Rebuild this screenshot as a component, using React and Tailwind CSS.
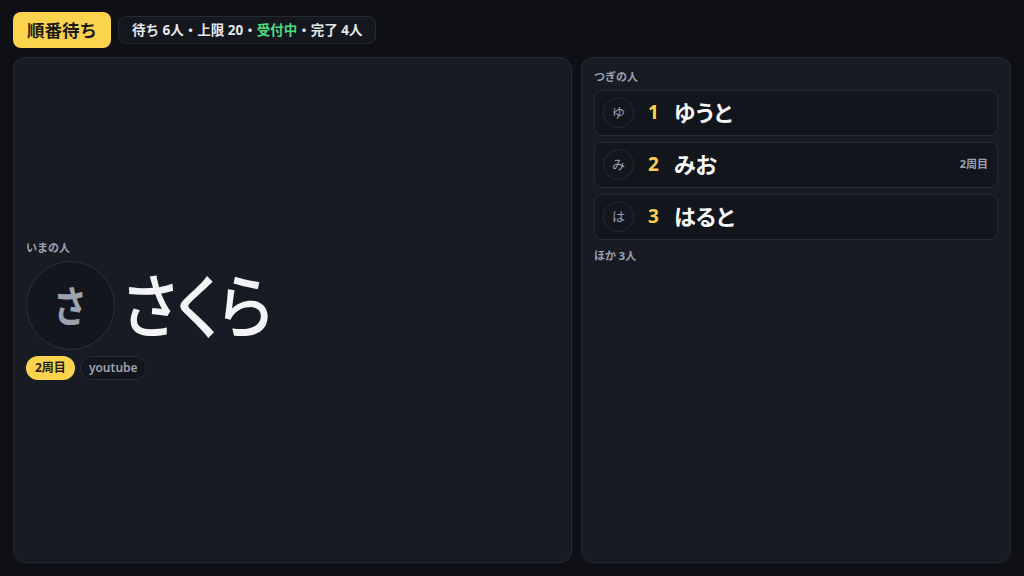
import React from 'react'

const next = [
  { n: 1, name: 'ゆうと', ini: 'ゆ' },
  { n: 2, name: 'みお', ini: 'み', note: '2周目' },
  { n: 3, name: 'はると', ini: 'は' },
]

const font = { fontFamily: '"Noto Sans", "Noto Sans CJK JP", sans-serif' }

export default function App() {
  return (
    <div style={font} className="h-[576px] w-[1024px] bg-[#0e1015] px-[13px] pt-[12px] pb-[13px] flex flex-col gap-[9px]">
      {/* header */}
      <div className="flex items-center gap-[7px] h-[36px]">
        <div className="h-[36px] px-[14px] rounded-lg bg-[#fcd34d] text-[#1c1a14] text-[17.5px] font-bold flex items-center">順番待ち</div>
        <div className="h-[28px] px-[13px] rounded-lg bg-[#14171d] border border-[#262a33] text-[13.5px] font-bold text-[#e5e7eb] flex items-center">
          待ち 6人・上限 20・<span className="text-[#4ade80]">受付中</span>・完了 4人
        </div>
      </div>

      <div className="flex-1 flex gap-[9px] min-h-0">
        {/* current */}
        <div className="w-[559px] rounded-xl bg-[#181b23] border border-[#262a33] px-[12px] flex flex-col justify-center">
          <div className="text-[11px] font-bold text-[#9ca3af] mb-[5px]">いまの人</div>
          <div className="flex items-center gap-[7px]">
            <div className="w-[89px] h-[89px] shrink-0 rounded-full bg-[#13161c] border border-[#2c313b] flex items-center justify-center">
              <span className="text-[42px] font-semibold text-[#9ca3af] leading-none scale-x-[0.8]">さ</span>
            </div>
            <div className="text-[70px] font-medium text-[#f3f4f6] leading-none origin-left scale-x-[0.88] [font-feature-settings:'palt']">さくら</div>
          </div>
          <div className="flex gap-[5px] mt-[6px]">
            <span className="h-[24px] px-[9px] rounded-full bg-[#fcd34d] text-[#1c1a14] text-[12px] font-bold flex items-center">2周目</span>
            <span className="h-[24px] px-[8px] rounded-full bg-[#13161c] border border-[#262a33] text-[#9ca3af] text-[12px] font-semibold flex items-center">youtube</span>
          </div>
        </div>

        {/* next */}
        <div className="flex-1 rounded-xl bg-[#181b23] border border-[#262a33] px-[12px] pt-[11px]">
          <div className="text-[11px] font-bold text-[#9ca3af] mb-[4px]">つぎの人</div>
          <div className="flex flex-col gap-[6px]">
            {next.map((p) => (
              <div key={p.n} className="h-[46px] rounded-lg bg-[#12151b] border border-[#262a33] pl-[8px] pr-[9px] flex items-center">
                <div className="w-[31px] h-[31px] rounded-full bg-[#13161c] border border-[#262a33] flex items-center justify-center text-[13px] text-[#9ca3af]">{p.ini}</div>
                <div className="w-[14px] ml-[14px] text-[19px] font-bold text-[#fcd34d]">{p.n}</div>
                <div className="ml-[12px] text-[22px] font-bold text-[#f9fafb] flex-1 [font-feature-settings:'palt']">{p.name}</div>
                {p.note && <div className="text-[11px] font-bold text-[#9ca3af]">{p.note}</div>}
              </div>
            ))}
          </div>
          <div className="text-[11px] font-bold text-[#9ca3af] mt-[8px]">ほか 3人</div>
        </div>
      </div>
    </div>
  )
}
